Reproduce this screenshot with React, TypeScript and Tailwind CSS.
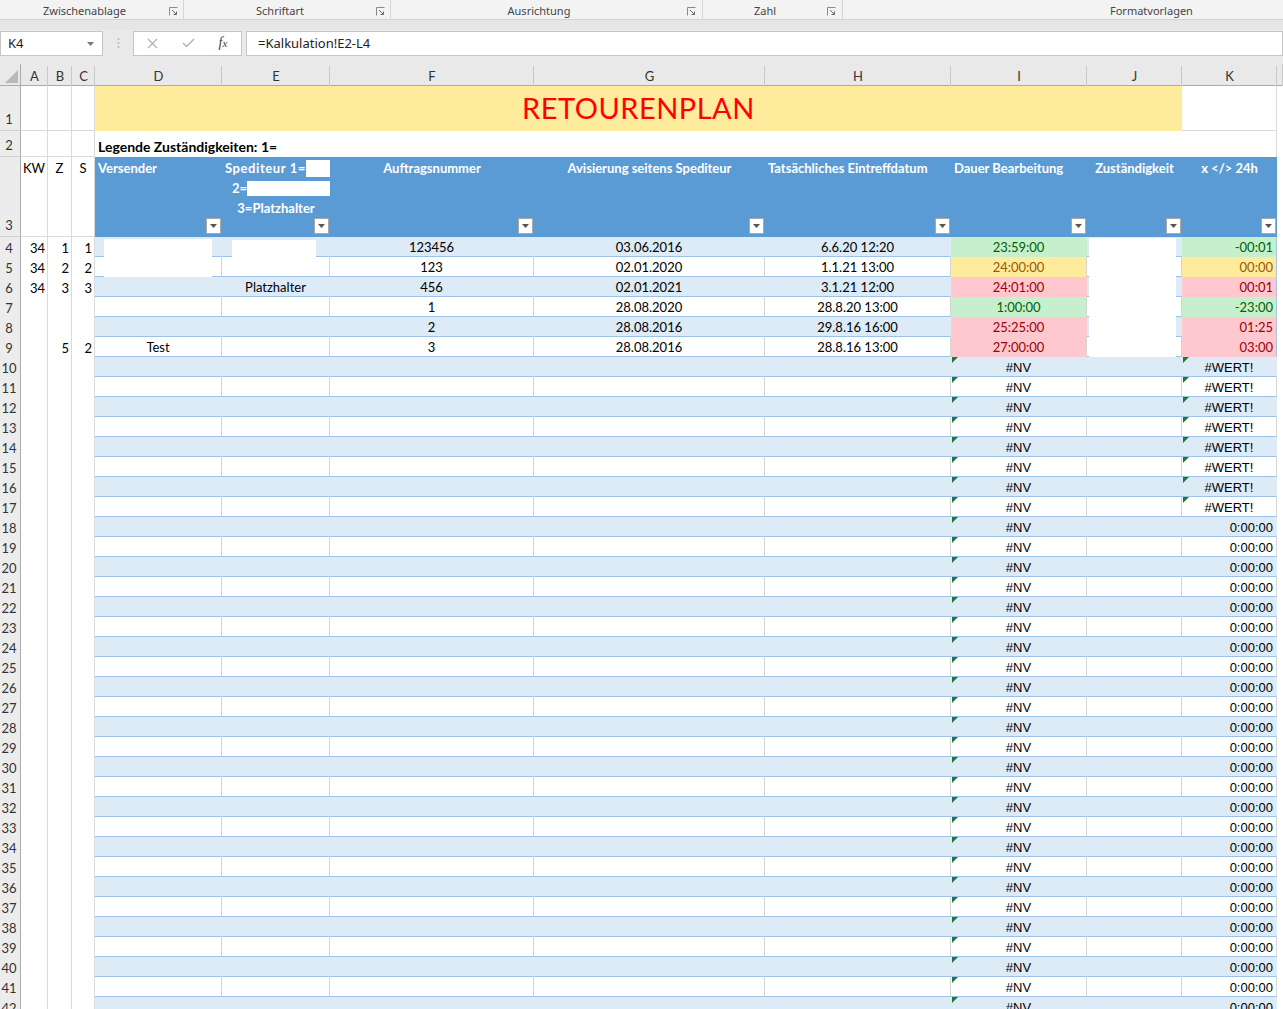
import React from "react";

const GRID =
  "grid grid-cols-[21px_27px_24px_23px_127px_108px_204px_231px_186px_136px_95px_95px_6px]";

const CAL = "[font-family:Lato,'Noto_Sans',sans-serif]";
const ARIAL = "[font-family:'Liberation_Sans',Arial,sans-serif]";
const SEGOE = "[font-family:'Noto_Sans','Open_Sans',sans-serif]";

type Tone = "g" | "y" | "r";
const toneCls: Record<Tone, string> = {
  g: "bg-[#c6efce] text-[#006100]",
  y: "bg-[#ffeb9c] text-[#9c5700]",
  r: "bg-[#ffc7ce] text-[#9c0006]",
};

type DataRow = {
  a?: string;
  b?: string;
  c?: string;
  d?: string;
  e?: string;
  f?: string;
  g?: string;
  h?: string;
  i?: string;
  it?: Tone;
  k?: string;
  kt?: Tone;
};

const DATA: Record<number, DataRow> = {
  4: { a: "34", b: "1", c: "1", f: "123456", g: "03.06.2016", h: "6.6.20 12:20", i: "23:59:00", it: "g", k: "-00:01", kt: "g" },
  5: { a: "34", b: "2", c: "2", f: "123", g: "02.01.2020", h: "1.1.21 13:00", i: "24:00:00", it: "y", k: "00:00", kt: "y" },
  6: { a: "34", b: "3", c: "3", e: "Platzhalter", f: "456", g: "02.01.2021", h: "3.1.21 12:00", i: "24:01:00", it: "r", k: "00:01", kt: "r" },
  7: { f: "1", g: "28.08.2020", h: "28.8.20 13:00", i: "1:00:00", it: "g", k: "-23:00", kt: "g" },
  8: { f: "2", g: "28.08.2016", h: "29.8.16 16:00", i: "25:25:00", it: "r", k: "01:25", kt: "r" },
  9: { b: "5", c: "2", d: "Test", f: "3", g: "28.08.2016", h: "28.8.16 13:00", i: "27:00:00", it: "r", k: "03:00", kt: "r" },
};

function Launcher() {
  return (
    <svg width="9" height="9" viewBox="0 0 9 9" className="shrink-0 mt-[3px]">
      <path d="M0.5 0.5 H8.5 M0.5 0.5 V8.5" stroke="#8a8a8a" strokeWidth="1" fill="none" />
      <path d="M3 3 L7.5 7.5 M7.5 4.5 V7.5 H4.5" stroke="#6a6a6a" strokeWidth="1" fill="none" />
    </svg>
  );
}

function Ribbon() {
  const grp = "h-full flex items-center border-r border-[#d6d6d6]";
  const lab = "flex-1 text-center text-[11px] text-[#444] pt-[3px]";
  return (
    <div className={`h-[19px] bg-[#f3f3f3] flex ${SEGOE}`}>
      <div className={`${grp} w-[184px] pr-[5px]`}>
        <span className={lab}>Zwischenablage</span>
        <Launcher />
      </div>
      <div className={`${grp} w-[207px] pr-[5px]`}>
        <span className={lab}>Schriftart</span>
        <Launcher />
      </div>
      <div className={`${grp} w-[312px] pr-[6px]`}>
        <span className={lab}>Ausrichtung</span>
        <Launcher />
      </div>
      <div className={`${grp} w-[140px] pr-[6px]`}>
        <span className={lab}>Zahl</span>
        <Launcher />
      </div>
      <div className="h-full flex items-center flex-1 pl-[267px]">
        <span className="text-[11px] text-[#444] pt-[3px]">Formatvorlagen</span>
      </div>
    </div>
  );
}

function FormulaBar() {
  return (
    <div className={`bg-[#e9e9e9] ${SEGOE}`}>
      <div className="h-[11px] border-t border-[#d2d2d2] bg-[#e6e6e6]" />
      <div className="h-[26px] flex items-center">
        <div className="w-[103px] h-[25px] bg-white border border-[#c6c6c6] flex items-center justify-between pl-[7px] pr-[8px] pt-[1px]">
          <span className="text-[13px] text-[#222]">K4</span>
          <svg width="7" height="4" viewBox="0 0 7 4">
            <polygon points="0,0 7,0 3.5,4" fill="#777" />
          </svg>
        </div>
        <div className="w-[30px] flex justify-center">
          <svg width="3" height="12" viewBox="0 0 3 12">
            <circle cx="1.5" cy="2" r="1" fill="#b5b5b5" />
            <circle cx="1.5" cy="6" r="1" fill="#b5b5b5" />
            <circle cx="1.5" cy="10" r="1" fill="#b5b5b5" />
          </svg>
        </div>
        <div className="w-[109px] h-[25px] bg-white border border-[#c6c6c6] flex items-center">
          <div className="w-[37px] flex justify-center">
            <svg width="11" height="11" viewBox="0 0 11 11">
              <path d="M1 1 L10 10 M10 1 L1 10" stroke="#b0b0b0" strokeWidth="1.2" />
            </svg>
          </div>
          <div className="w-[34px] flex justify-center">
            <svg width="13" height="10" viewBox="0 0 13 10">
              <path d="M1 5 L4.5 8.5 L12 1" stroke="#b0b0b0" strokeWidth="1.3" fill="none" />
            </svg>
          </div>
          <div className="flex-1 flex justify-center">
            <span className="[font-family:'Liberation_Serif',serif] italic text-[14px] text-[#444] leading-none">
              f<span className="text-[11px]">x</span>
            </span>
          </div>
        </div>
        <div className="w-[4px]" />
        <div className="flex-1 h-[25px] bg-white border border-[#c6c6c6] flex items-center pl-[11px] pt-[1px]">
          <span className="text-[13px] text-[#222]">=Kalkulation!E2-L4</span>
        </div>
      </div>
      <div className="h-[8px]" />
    </div>
  );
}

function ColHeaders() {
  const letters = ["A", "B", "C", "D", "E", "F", "G", "H", "I", "J", "K"];
  return (
    <div className={`${GRID} h-[22px] bg-[#e9e9e9] border-b border-[#ababab] ${CAL}`}>
      <div className="relative border-r border-[#ababab]">
        <svg className="absolute left-[5px] top-[6px]" width="13" height="13" viewBox="0 0 13 13">
          <polygon points="13,0 13,13 0,13" fill="#b8b8b8" />
        </svg>
      </div>
      {letters.map((l) => (
        <div
          key={l}
          className="flex items-center justify-center text-[13px] text-[#333] border-r border-[#c8c8c8] mt-[2px] pt-[1px] pl-[1px]"
        >
          {l}
        </div>
      ))}
      <div className="border-r border-[#c8c8c8]" />
    </div>
  );
}

function RowHead({ n, align = "center" }: { n: number; align?: "center" | "end" }) {
  return (
    <div
      className={`bg-[#ececec] border-r border-r-[#ababab] border-b border-b-[#d2d2d2] text-[13px] text-[#333] flex justify-center pr-[2px] ${
        align === "end" ? "items-end pb-[1px]" : "items-center pt-[2px]"
      }`}
    >
      {n}
    </div>
  );
}

function Grd({ children, cls = "" }: { children?: React.ReactNode; cls?: string }) {
  return (
    <div className={`bg-white border-r border-b border-[#dadada] text-[13px] text-black flex ${cls}`}>
      {children}
    </div>
  );
}

function FilterBtn() {
  return (
    <div className="absolute right-[1px] bottom-[3px] w-[15px] h-[16px] bg-white border border-[#a9a9a9] flex items-center justify-center">
      <svg width="7" height="4" viewBox="0 0 7 4">
        <polygon points="0,0 7,0 3.5,4" fill="#555" />
      </svg>
    </div>
  );
}

function Tri() {
  return (
    <svg className="absolute left-[1px] top-0" width="6" height="6" viewBox="0 0 6 6">
      <polygon points="0,0 6,0 0,6" fill="#1d7a33" />
    </svg>
  );
}

function DataRowView({ r }: { r: number }) {
  const d = DATA[r] || {};
  const even = r % 2 === 0;
  const bg = even ? "bg-[#ddebf7]" : "bg-white";
  const vr = even ? "border-r-transparent" : "border-r-[#d4d4d4]";
  const base = `relative h-[20px] border-b border-r border-b-[#9bc2e6] ${vr} ${bg} text-[13px] flex items-center pt-[2px]`;
  const iErr = r >= 10;
  const kWert = r >= 10 && r <= 17;
  const kZero = r >= 18;
  return (
    <div className={`${GRID} h-[20px] ${CAL}`}>
      <RowHead n={r} />
      <Grd cls="items-center justify-end pr-[2px] pt-[2px]">{d.a}</Grd>
      <Grd cls="items-center justify-end pr-[2px] pt-[2px]">{d.b}</Grd>
      <Grd cls="items-center justify-end pr-[2px] pt-[2px]">{d.c}</Grd>
      {/* D */}
      <div className={`${base} justify-center`}>
        {d.d}
        {r === 4 && <div className="absolute left-[9px] top-[2px] w-[108px] h-[38px] bg-white z-10" />}
      </div>
      {/* E */}
      <div className={`${base} justify-center`}>
        {d.e}
        {r === 4 && <div className="absolute left-[10px] top-[3px] w-[84px] h-[17px] bg-white z-10" />}
      </div>
      <div className={`${base} justify-center`}>{d.f}</div>
      <div className={`${base} justify-center`}>{d.g}</div>
      <div className={`${base} justify-center`}>{d.h}</div>
      {/* I */}
      {d.it ? (
        <div className={`relative h-[20px] border-r border-b border-b-transparent ${vr} ${toneCls[d.it]} text-[13px] flex items-center justify-center pt-[2px]`}>
          {d.i}
        </div>
      ) : (
        <div className={`${base} justify-center`}>
          {iErr && <Tri />}
          {iErr && <span className={ARIAL}>#NV</span>}
        </div>
      )}
      {/* J */}
      <div className={`${base}`}>
        {r === 4 && <div className="absolute left-[2px] top-[1px] w-[87px] h-[119px] bg-white z-10" />}
      </div>
      {/* K */}
      {d.kt ? (
        <div className={`relative h-[20px] border-r border-b border-b-transparent border-r-[#a9c4dc] ${toneCls[d.kt]} text-[13px] flex items-center justify-end pr-[3px] pt-[2px]`}>
          {d.k}
        </div>
      ) : (
        <div className={`${base} border-r-[#a9c4dc] ${kZero ? "justify-end pr-[3px]" : "justify-center"}`}>
          {kWert && <Tri />}
          {kWert && <span className={ARIAL}>#WERT!</span>}
          {kZero && <span className={ARIAL}>0:00:00</span>}
        </div>
      )}
      <div className="bg-white" />
    </div>
  );
}

function HeaderRow() {
  const blue = "relative bg-[#5b9bd5] text-white font-bold text-[13px] leading-[20px] pt-[1px]";
  return (
    <div className={`${GRID} h-[80px] ${CAL}`}>
      <RowHead n={3} align="end" />
      <Grd cls="justify-center pt-[2px]">KW</Grd>
      <Grd cls="justify-center pt-[2px]">Z</Grd>
      <Grd cls="justify-center pt-[2px]">S</Grd>
      <div className={`${blue} pl-[3px]`}>
        Versender
        <FilterBtn />
      </div>
      <div className={`${blue} text-center`}>
        <div className="flex justify-end items-center">
          <span className="tracking-[0.6px]">Spediteur 1=</span>
          <span className="inline-block w-[24px] h-[17px] bg-white" />
        </div>
        <div className="flex justify-end items-center">
          <span>2=</span>
          <span className="inline-block w-[83px] h-[15px] bg-white" />
        </div>
        <div>3=Platzhalter</div>
        <FilterBtn />
      </div>
      <div className={`${blue} text-center`}>
        Auftragsnummer
        <FilterBtn />
      </div>
      <div className={`${blue} text-center`}>
        Avisierung seitens Spediteur
        <FilterBtn />
      </div>
      <div className={`${blue} pl-[3px] whitespace-nowrap`}>
        Tatsächliches Eintreffdatum
        <FilterBtn />
      </div>
      <div className={`${blue} pl-[3px] whitespace-nowrap`}>
        Dauer Bearbeitung
        <FilterBtn />
      </div>
      <div className={`${blue} text-center`}>
        Zuständigkeit
        <FilterBtn />
      </div>
      <div className={`${blue} text-center`}>
        x &lt;/&gt; 24h
        <FilterBtn />
      </div>
      <div className="bg-white" />
    </div>
  );
}

export default function App() {
  const rows: number[] = [];
  for (let r = 4; r <= 42; r++) rows.push(r);
  return (
    <div className="w-[1283px] h-[1009px] overflow-hidden bg-white">
      <Ribbon />
      <FormulaBar />
      <ColHeaders />
      {/* Row 1 */}
      <div className={`${GRID} h-[45px] ${CAL}`}>
        <RowHead n={1} align="end" />
        <Grd />
        <Grd />
        <Grd />
        <div className="col-span-7 bg-[#ffeb9c] flex items-center justify-center text-[#ff0000] text-[29px] tracking-[0.5px] pb-[1px]">
          RETOURENPLAN
        </div>
        <Grd />
        <div className="bg-white" />
      </div>
      {/* Row 2 */}
      <div className={`${GRID} h-[26px] ${CAL}`}>
        <RowHead n={2} align="end" />
        <Grd />
        <Grd />
        <Grd />
        <div className="col-span-7 bg-white flex items-end pb-0 pl-[3px] text-[14px] font-bold text-black">
          Legende Zuständigkeiten: 1=
        </div>
        <Grd cls="border-b-0" />
        <div className="bg-white" />
      </div>
      <HeaderRow />
      {rows.map((r) => (
        <DataRowView key={r} r={r} />
      ))}
    </div>
  );
}
